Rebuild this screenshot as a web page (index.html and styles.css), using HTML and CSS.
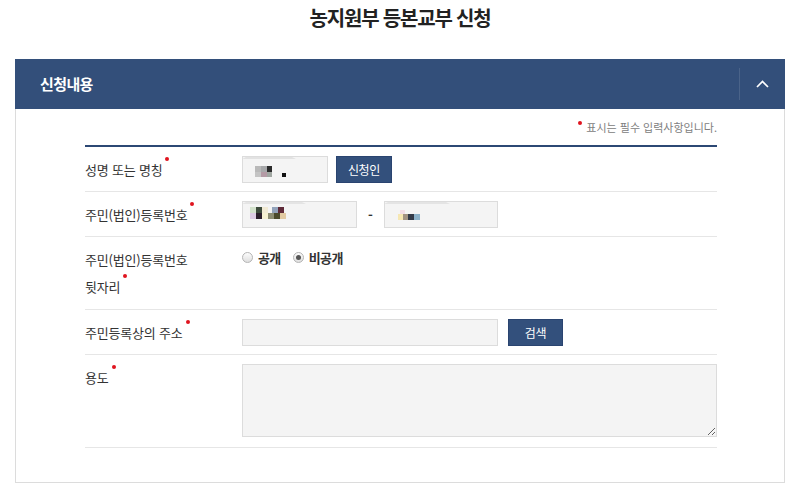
FILE: index.html
```html
<!DOCTYPE html>
<html lang="ko">
<head>
<meta charset="utf-8">
<title>농지원부 등본교부 신청</title>
<link rel="stylesheet" href="styles.css">
</head>
<body>
<h1 class="title">농지원부 등본교부 신청</h1>
<section class="panel">
  <header class="panel-head">
    <h2 class="panel-title">신청내용</h2>
    <div class="toggle">
      <svg width="13" height="8" viewBox="0 0 13 8"><polyline points="1,7 6.5,1.5 12,7" fill="none" stroke="#fff" stroke-width="1.7"/></svg>
    </div>
  </header>
  <div class="panel-body">
    <p class="note"><span class="dot note-dot"></span>표시는 필수 입력사항입니다.</p>
    <div class="form">
      <div class="row">
        <div class="label">성명 또는 명칭<span class="dot"></span></div>
        <div class="field">
          <div class="box w-name">
            <svg width="86" height="27" viewBox="0 0 86 27">
              <polygon points="4,1 50,1 54,3 0,3" fill="#e2e2e2"/>
              <rect x="13" y="10" width="6" height="6" fill="#b9b9b9"/>
              <rect x="19" y="10" width="6" height="6" fill="#a7a8aa"/>
              <rect x="25" y="10" width="5" height="6" fill="#2b2b2b"/>
              <rect x="13" y="16" width="6" height="5" fill="#c4c4c4"/>
              <rect x="19" y="16" width="6" height="5" fill="#b49aa5"/>
              <rect x="25" y="16" width="5" height="5" fill="#a1a7a2"/>
              <rect x="40" y="17" width="4" height="4" fill="#111"/>
            </svg>
          </div>
          <button class="btn">신청인</button>
        </div>
      </div>
      <div class="row">
        <div class="label">주민(법인)등록번호<span class="dot"></span></div>
        <div class="field">
          <div class="box w-id">
            <svg width="115" height="27" viewBox="0 0 115 27">
              <polygon points="4,1 60,1 64,3 0,3" fill="#e4e4e4"/>
              <rect x="8" y="6" width="6" height="6" fill="#d3e2cc"/>
              <rect x="14" y="6" width="6" height="6" fill="#3d4b3c"/>
              <rect x="20" y="6" width="6" height="6" fill="#f1ead4"/>
              <rect x="30" y="6" width="6" height="6" fill="#93a3bb"/>
              <rect x="36" y="6" width="6" height="6" fill="#5e2a38"/>
              <rect x="8" y="12" width="6" height="6" fill="#dccbe3"/>
              <rect x="14" y="12" width="6" height="6" fill="#2a1e2a"/>
              <rect x="20" y="12" width="6" height="6" fill="#f6f1d2"/>
              <rect x="26" y="12" width="6" height="6" fill="#8d8d73"/>
              <rect x="32" y="12" width="6" height="6" fill="#4b4a2c"/>
              <rect x="38" y="12" width="6" height="6" fill="#e2caa2"/>
            </svg>
          </div>
          <span class="dash">-</span>
          <div class="box w-id2">
            <svg width="114" height="27" viewBox="0 0 114 27">
              <polygon points="4,1 62,1 66,3 0,3" fill="#e4e4e4"/>
              <rect x="16" y="9" width="5" height="4" fill="#f3dde6"/>
              <rect x="14" y="13" width="5" height="6" fill="#f6e7b3"/>
              <rect x="19" y="13" width="5" height="6" fill="#a39383"/>
              <rect x="24" y="13" width="6" height="6" fill="#333a48"/>
              <rect x="30" y="13" width="6" height="6" fill="#8db2c9"/>
            </svg>
          </div>
        </div>
      </div>
      <div class="row top mid">
        <div class="label">주민(법인)등록번호<br>뒷자리<span class="dot"></span></div>
        <div class="field radios">
          <label class="radio"><span class="circle"></span>공개</label>
          <label class="radio"><span class="circle checked"></span>비공개</label>
        </div>
      </div>
      <div class="row">
        <div class="label">주민등록상의 주소<span class="dot"></span></div>
        <div class="field">
          <input class="box w-addr" type="text">
          <button class="btn btn-search">검색</button>
        </div>
      </div>
      <div class="row top last">
        <div class="label">용도<span class="dot"></span></div>
        <div class="field">
          <textarea class="box area"></textarea>
        </div>
      </div>
    </div>
  </div>
</section>
</body>
</html>
```
FILE: styles.css
```css
* { box-sizing: border-box; }
body {
  margin: 0;
  background: #fff;
  font-family: "Noto Sans CJK KR", "Noto Sans", sans-serif;
  color: #333;
}
.title {
  margin: 0;
  padding-top: 6px;
  height: 59px;
  line-height: 24px;
  font-size: 20px;
  font-weight: bold;
  letter-spacing: -1.2px;
  text-align: center;
  color: #222;
}
.panel {
  margin: 0 15px;
  border: 1px solid #dcdcdc;
  border-top: none;
}
.panel-head {
  height: 50px;
  background: #334f7a;
  margin: 0 -1px;
  display: flex;
  align-items: center;
  justify-content: space-between;
}
.panel-title {
  margin: 0 0 0 25px;
  font-size: 15px;
  font-weight: bold;
  letter-spacing: -0.6px;
  color: #fff;
  line-height: 20px;
}
.toggle {
  width: 46px;
  height: 32px;
  border-left: 1px solid #4a6389;
  display: flex;
  align-items: center;
  justify-content: center;
}
.toggle svg { display: block; }
.panel-body {
  padding: 9px 67px 34px 69px;
}
.note {
  margin: 0 0 9px;
  text-align: right;
  font-size: 11px;
  line-height: 18px;
  letter-spacing: 0;
  color: #808080;
}
.dot {
  display: inline-block;
  width: 4px;
  height: 4px;
  border-radius: 50%;
  background: #e0141e;
  margin-left: 3px;
  vertical-align: 14px;
}
.note-dot {
  margin: 0 4px 0 0;
  vertical-align: 7px;
}
.form {
  border-top: 2px solid #2c4874;
}
.row {
  display: flex;
  align-items: center;
  padding: 9px 0 8px;
  border-bottom: 1px solid #e6e6e6;
}
.row.top { align-items: flex-start; }
.row.mid { padding-bottom: 9px; }
.row.last { padding-bottom: 10px; }
.label {
  width: 157px;
  flex: none;
  font-size: 13px;
  letter-spacing: -0.2px;
  line-height: 27px;
  color: #333;
}
.field {
  display: flex;
  align-items: center;
}
.box {
  display: block;
  height: 27px;
  background: #f4f4f4;
  border: 1px solid #dcdcdc;
  overflow: hidden;
  padding: 0;
  margin: 0;
  font: inherit;
}
.box svg { display: block; margin: -1px 0 0 -1px; }
.w-name { width: 86px; }
.w-id { width: 115px; }
.w-id2 { width: 114px; }
.w-addr { width: 256px; }
.area {
  width: 475px;
  height: 73px;
  resize: vertical;
}
.dash {
  width: 27px;
  text-align: center;
  font-size: 13px;
  font-weight: bold;
  color: #333;
}
.btn {
  height: 27px;
  margin-left: 8px;
  padding: 0;
  width: 56px;
  border: 1px solid #2a4470;
  background: #33507c;
  color: #fff;
  font-family: inherit;
  font-size: 12px;
  letter-spacing: -0.3px;
}
.btn-search { margin-left: 10px; width: 55px; }
.radios {
  height: 22px;
  gap: 12px;
}
.radio {
  display: flex;
  align-items: center;
  font-size: 13px;
  font-weight: bold;
  letter-spacing: -0.6px;
  color: #333;
}
.circle {
  width: 11px;
  height: 11px;
  border-radius: 50%;
  border: 1px solid #b4b4b4;
  background: linear-gradient(#fdfdfd, #dedede);
  margin-right: 5px;
  display: flex;
  align-items: center;
  justify-content: center;
}
.circle.checked::after {
  content: "";
  width: 5px;
  height: 5px;
  border-radius: 50%;
  background: #555;
}
```
